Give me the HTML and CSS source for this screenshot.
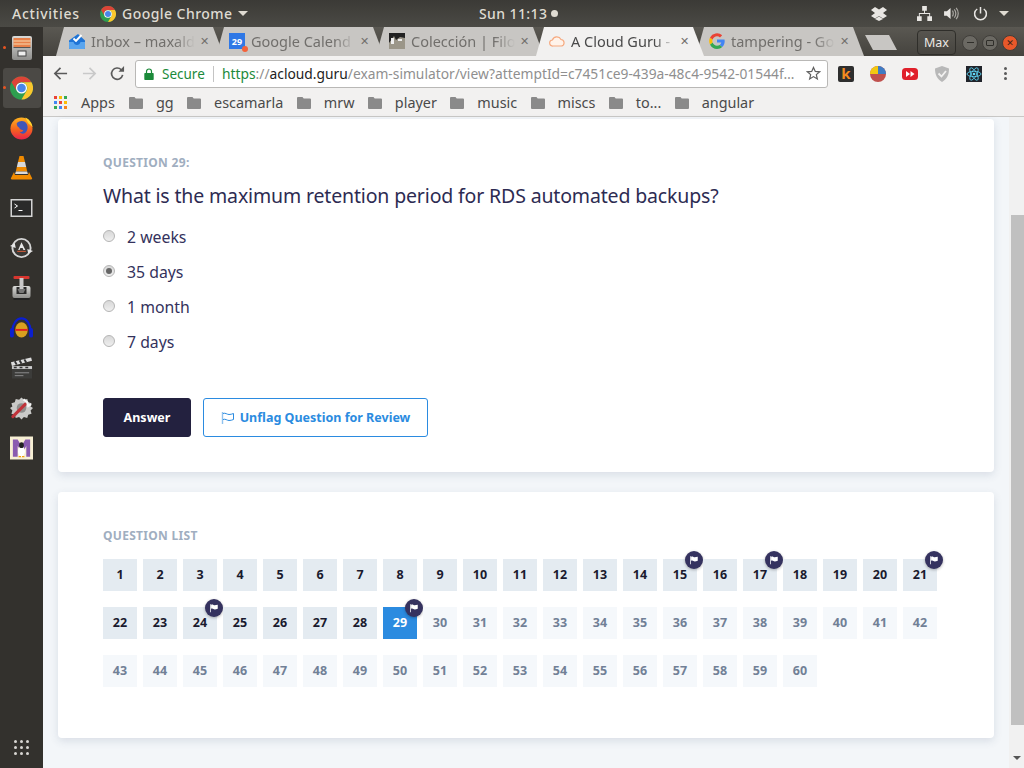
FILE: index.html
```html
<!DOCTYPE html>
<html lang="en">
<head>
<meta charset="utf-8">
<title>A Cloud Guru</title>
<link rel="stylesheet" href="styles.css">
</head>
<body>
<svg class="defs" width="0" height="0" aria-hidden="true">
  <defs>
    <symbol id="chrome" viewBox="0 0 24 24">
      <circle cx="12" cy="12" r="12" fill="#2e9e4f"/>
      <path d="M1.600 6A12 12 0 0 1 22.400 6H12A6 6 0 0 0 7 15z" fill="#dc4437"/>
      <path d="M22.400 6A12 12 0 0 1 12 24l5.200-9A6 6 0 0 0 12 6z" fill="#fbc62d"/>
      <circle cx="12" cy="12" r="5.800" fill="#fff"/>
      <circle cx="12" cy="12" r="4.500" fill="#4a86e8"/>
    </symbol>
    <symbol id="folder" viewBox="0 0 14 12">
      <path d="M1 0h4.500l1.200 1.500H13a1 1 0 0 1 1 1V11a1 1 0 0 1-1 1H1a1 1 0 0 1-1-1V1a1 1 0 0 1 1-1z" fill="#8a8a8a"/>
    </symbol>
    <symbol id="minflag" viewBox="0 0 12 12">
      <path d="M1.500 1.500h.9v9.500h-.9z" fill="#fff"/>
      <path d="M2.500 2c2-1 3 .6 4.400.6.900 0 2-.3 3.600-.6v5c-1.400.4-2.700.7-3.600.7-1.400 0-2.400-1.700-4.400-.7z" fill="#fff"/>
    </symbol>
    <linearGradient id="ffx" x1="0" y1="0" x2="0" y2="1">
      <stop offset="0" stop-color="#ffb21f"/>
      <stop offset=".55" stop-color="#f5631e"/>
      <stop offset="1" stop-color="#e8224c"/>
    </linearGradient>
    <linearGradient id="steel" x1="0" y1="0" x2="0" y2="1">
      <stop offset="0" stop-color="#d9d9d7"/>
      <stop offset="1" stop-color="#8e8e8c"/>
    </linearGradient>
  </defs>
</svg>

<header class="topbar">
  <span class="activities">Activities</span>
  <svg class="top-chrome"><use href="#chrome"/></svg>
  <span class="appname">Google Chrome</span>
  <span class="caret"></span>
  <span class="clock">Sun 11:13</span>
  <span class="clock-dot"></span>
  <svg class="tray tray-dropbox" viewBox="0 0 16 14"><path d="M4 0l4 2.600L12 0l4 3-4 3 4 3-4 2.600L8 9 4 11.600 0 9l4-3-4-3zM4 12l4-2.500 4 2.500-4 2z" fill="#e8e6e3"/></svg>
  <svg class="tray tray-net" viewBox="0 0 16 16"><path d="M5.500 0h5v5h-2v2.500H14V11h2v5h-5v-5h2V8.500H3V11h2v5H0v-5h2V7.500h5.500V5h-2z" fill="#e8e6e3"/></svg>
  <svg class="tray tray-vol" viewBox="0 0 16 14"><path d="M0 4.500h3L7 1v12L3 9.500H0z" fill="#e8e6e3"/><path d="M9 4c1.200 1.500 1.200 4.500 0 6M11 2.500c2.200 2.500 2.200 6.500 0 9M13 1c3 3.500 3 8.500 0 12" fill="none" stroke="#a9a7a2" stroke-width="1.300"/></svg>
  <svg class="tray tray-pow" viewBox="0 0 16 16"><path d="M8 1v7M4.500 3.200a6.300 6.300 0 1 0 7 0" fill="none" stroke="#e8e6e3" stroke-width="1.600"/></svg>
  <span class="caret caret-right"></span>
</header>

<div class="desktop">
  <nav class="dock">
    <div class="dock-item running">
      <svg viewBox="0 0 20 24" class="dock-icon dock-files"><rect x="0" y="0" width="20" height="24" rx="2" fill="url(#steel)"/><rect x="1.500" y="2" width="17" height="9" fill="#e8814a"/><path d="M1.500 5h17M1.500 8h17" stroke="#f8d9b0" stroke-width="1.200"/><rect x="1.500" y="11" width="17" height="1" fill="#555"/><rect x="6" y="15" width="8" height="5" fill="#eee" stroke="#444"/></svg>
    </div>
    <div class="dock-item active running">
      <svg class="dock-icon dock-chrome"><use href="#chrome"/></svg>
    </div>
    <div class="dock-item">
      <svg viewBox="0 0 24 24" class="dock-icon"><circle cx="12" cy="12.500" r="11.500" fill="url(#ffx)"/><path d="M16 1c4 1.500 7 6 7.500 10L19 7z" fill="#ffd32e"/><path d="M7 7c3-3 8-3 10 0 2 3 2 7-1 10-2 1.500-5 1-6-1 2 .5 3.500-.5 4-2-2 .5-4-.5-4.500-2.500C8 11 7 9 7 7z" fill="#3f56b8"/></svg>
    </div>
    <div class="dock-item">
      <svg viewBox="0 0 22 24" class="dock-icon"><path d="M9 0h4l1.500 6h-7z" fill="#f08a00"/><path d="M7.500 6h7l1.200 5H6.300z" fill="#d9d9d9"/><path d="M6.300 11h9.400l1 4.500H5.300z" fill="#f08a00"/><path d="M5.300 15.500h11.400l.7 2.500H4.600z" fill="#d9d9d9"/><path d="M3.500 16L.5 22a1 1 0 0 0 1 1.500h19a1 1 0 0 0 1-1.500l-3-6-1 3H4.500z" fill="#f08a00"/></svg>
    </div>
    <div class="dock-item">
      <svg viewBox="0 0 22 18" class="dock-icon dock-term"><rect x=".75" y=".75" width="20.500" height="16.500" fill="#2a2a2a" stroke="#d4d4d4" stroke-width="1.500"/><path d="M4 5l3 2-3 2" fill="none" stroke="#fff"/><path d="M8 11.500h4" stroke="#fff"/></svg>
    </div>
    <div class="dock-item">
      <svg viewBox="0 0 24 24" class="dock-icon"><circle cx="12" cy="12" r="9.500" fill="#3a3835" stroke="#d6d6d6" stroke-width="2"/><path d="M12 6l-3.500 8h1.500l.8-2h2.400l.8 2H16z" fill="#e6e6e6"/><path d="M7.500 15.500h9" stroke="#e0603a"/><path d="M0 10l5-3 1 5zM24 15l-5 3-1-5z" fill="#e6e6e6"/></svg>
    </div>
    <div class="dock-item">
      <svg viewBox="0 0 22 24" class="dock-icon"><rect x="3" y="0" width="16" height="3" rx="1" fill="#d8362f"/><rect x="2" y="10" width="18" height="12" rx="2" fill="url(#steel)"/><path d="M6 11h10v7H6z" fill="#2a2a2a"/><rect x="9" y="2" width="4" height="12" fill="#c9c9c9"/><path d="M7 13h8l-2 4H9z" fill="#777"/><rect x="3" y="22" width="16" height="2" fill="#222"/></svg>
    </div>
    <div class="dock-item">
      <svg viewBox="0 0 24 24" class="dock-icon"><path d="M2.500 15a9.500 13 0 0 1 19 0" fill="none" stroke="#0b1fd0" stroke-width="2.200"/><rect x="0" y="12" width="4" height="10" rx="2" fill="#0b1fd0"/><rect x="20" y="12" width="4" height="10" rx="2" fill="#0b1fd0"/><ellipse cx="12" cy="14" rx="6.500" ry="8" fill="#d8a01f"/><path d="M5.500 13h13v2h-13z" fill="#e02020"/></svg>
    </div>
    <div class="dock-item">
      <svg viewBox="0 0 24 24" class="dock-icon"><path d="M1 6l21-5 1 3.500L2 10z" fill="#ddd"/><path d="M5 5l2 3.500M10 4l2 3.500M15 3l2 3.500" stroke="#333" stroke-width="2"/><rect x="2" y="10" width="21" height="13" fill="#3c3c3a"/><path d="M2 10h21v3H2z" fill="#ccc"/><path d="M4 11.500h3M10 11.500h3M16 11.500h3" stroke="#333" stroke-width="1.500"/><path d="M5 17h15M5 20h9" stroke="#8f8f8f"/></svg>
    </div>
    <div class="dock-item">
      <svg viewBox="0 0 24 24" class="dock-icon"><path d="M12 1l2.500 2.500L18 2.500l1 3.500 3.500 1-1 3.500L24 12l-2.500 2.500 1 3.500-3.500 1-1 3.500-3.500-1L12 24l-2.500-2.500-3.500 1-1-3.500-3.500-1 1-3.500L0 12l2.500-1.500-1-3.500L5 6l1-3.500 3.500 1z" fill="#cacac8"/><circle cx="12" cy="12" r="5" fill="#8f8f8d"/><path d="M3 21L16 8" stroke="#c0333a" stroke-width="3.200" stroke-linecap="round"/><path d="M14 3l4 3 1 4 3-2" fill="none" stroke="#f5f5f5" stroke-width="2.200"/></svg>
    </div>
    <div class="dock-item">
      <svg viewBox="0 0 24 24" class="dock-icon"><rect width="24" height="24" fill="#f7efd4"/><path d="M3 3h5l4 7 4-7h5v18h-4V10l-4 7-5-7v11H3z" fill="#8a5bb0"/><ellipse cx="12" cy="15.500" rx="3.600" ry="5.500" fill="#fff"/><ellipse cx="12" cy="9" rx="2.400" ry="3" fill="#222"/><path d="M9 21h2.500M12.500 21H15" stroke="#f2a20d" stroke-width="1.500"/></svg>
    </div>
    <div class="dock-apps">
      <i></i><i></i><i></i><i></i><i></i><i></i><i></i><i></i><i></i>
    </div>
  </nav>

  <div class="browser">
    <div class="tabstrip">
      <div class="tab">
        <svg class="favicon" viewBox="0 0 16 16"><path d="M0 7.500L9 1l7 6.500V15a1 1 0 0 1-1 1H1a1 1 0 0 1-1-1z" fill="#1f74d6"/><path d="M0 9h4.500c.5 2 1.800 3 3.500 3s3-1 3.500-3H16v6a1 1 0 0 1-1 1H1a1 1 0 0 1-1-1z" fill="#5aa5ee"/><path d="M4.500 5.500L7 8l5.500-6" fill="none" stroke="#fff" stroke-width="1.900"/></svg>
        <span class="tab-title">Inbox – maxald</span><span class="tab-x">✕</span>
      </div>
      <div class="tab">
        <span class="cal-icon"><span class="cal-num">29</span><span class="cal-dot"></span></span>
        <span class="tab-title">Google Calend</span><span class="tab-x">✕</span>
      </div>
      <div class="tab">
        <svg class="favicon" viewBox="0 0 16 16"><rect width="16" height="16" fill="#222"/><path d="M0 10l5-7 2 4 4-3 5 1v11H0z" fill="#9b9689"/><path d="M2 5h3v6H2zM9 6h4v2H9z" fill="#eee"/></svg>
        <span class="tab-title">Colección | Filo</span><span class="tab-x">✕</span>
      </div>
      <div class="tab tab-active">
        <svg class="favicon" viewBox="0 0 16 16"><path d="M4 13a3 3 0 0 1-.6-6A4.700 4.700 0 0 1 12 6.500 3.300 3.300 0 0 1 12.500 13z" fill="#fff3ea" stroke="#f6a97f" stroke-width="1.200"/></svg>
        <span class="tab-title">A Cloud Guru -</span><span class="tab-x">✕</span>
      </div>
      <div class="tab">
        <svg class="favicon" viewBox="0 0 16 16"><path d="M15.700 8.200c0-.6-.1-1.100-.2-1.600H8v3h4.300a3.700 3.700 0 0 1-1.600 2.400l2.500 2c1.500-1.400 2.500-3.400 2.500-5.800z" fill="#4285f4"/><path d="M8 16c2.200 0 4-.7 5.200-2l-2.500-2c-.7.500-1.600.8-2.700.8-2 0-3.800-1.400-4.400-3.300L1 11.500A8 8 0 0 0 8 16z" fill="#34a853"/><path d="M3.600 9.500a4.800 4.800 0 0 1 0-3L1 4.500a8 8 0 0 0 0 7z" fill="#fbbc05"/><path d="M8 3.200c1.200 0 2.200.4 3 1.200l2.200-2.200A8 8 0 0 0 1 4.500l2.600 2C4.200 4.600 6 3.200 8 3.200z" fill="#ea4335"/></svg>
        <span class="tab-title">tampering - Go</span><span class="tab-x">✕</span>
      </div>
      <div class="newtab"></div>
      <div class="winctl">
        <span class="profile">Max</span>
        <span class="wbtn"><i class="w-min"></i></span>
        <span class="wbtn"><i class="w-max"></i></span>
        <span class="wbtn wbtn-close"><i class="w-close">✕</i></span>
      </div>
    </div>

    <div class="toolbar">
      <svg class="nav-icon" viewBox="0 0 16 16"><path d="M15 8H2M8 2L2 8l6 6" fill="none" stroke="#5a5a5a" stroke-width="1.800"/></svg>
      <svg class="nav-icon nav-fwd" viewBox="0 0 16 16"><path d="M1 8h13M8 2l6 6-6 6" fill="none" stroke="#c9c9c9" stroke-width="1.800"/></svg>
      <svg class="nav-icon nav-reload" viewBox="0 0 16 16"><path d="M13.500 9.500A6 6 0 1 1 12 4" fill="none" stroke="#5a5a5a" stroke-width="1.800"/><path d="M9 6h6V0z" fill="#5a5a5a"/></svg>
      <div class="omnibox">
        <svg class="lock" viewBox="0 0 10 12"><path d="M1 5h8a.7.7 0 0 1 .7.7v5.600a.7.7 0 0 1-.7.7H1a.7.7 0 0 1-.7-.7V5.700A.7.7 0 0 1 1 5z" fill="#1b8a3a"/><path d="M2.500 5V3.500a2.500 2.500 0 0 1 5 0V5" fill="none" stroke="#1b8a3a" stroke-width="1.200"/></svg>
        <span class="secure">Secure</span>
        <span class="sep"></span>
        <span class="url"><span class="u-https">https</span><span class="u-rest">://</span><span class="u-host">acloud.guru</span><span class="u-rest">/exam-simulator/view?attemptId=c7451ce9-439a-48c4-9542-01544f…</span></span>
        <svg class="star" viewBox="0 0 16 16"><path d="M8 1.500l1.900 4.300 4.600.4-3.500 3 1.100 4.600L8 11.300l-4.100 2.500L5 9.200l-3.500-3 4.600-.4z" fill="none" stroke="#5f5f5f" stroke-width="1.300"/></svg>
      </div>
      <div class="ext ext-k"><span>k</span></div>
      <svg class="ext" viewBox="0 0 16 16"><circle cx="8" cy="8" r="8" fill="#c0504d"/><path d="M8 8V0a8 8 0 0 1 8 8z" fill="#3f7cc4"/><path d="M8 8V0A8 8 0 0 0 0 8z" fill="#f2c811"/></svg>
      <svg class="ext" viewBox="0 0 16 16"><rect y="2" width="16" height="12" rx="3.500" fill="#e0202a"/><path d="M4 5l4 3-4 3zM8.500 5l4 3-4 3z" fill="#fff"/></svg>
      <svg class="ext" viewBox="0 0 16 16"><path d="M8 0l7 2.500C15 9 13 13 8 16 3 13 1 9 1 2.500z" fill="#b8b8b8"/><path d="M4.500 7.500L7.500 10.500 12 5" fill="none" stroke="#f2f1f0" stroke-width="1.800"/></svg>
      <svg class="ext" viewBox="0 0 16 16"><rect width="16" height="16" fill="#20232a"/><g fill="none" stroke="#61dafb" stroke-width=".8"><ellipse cx="8" cy="8" rx="7" ry="2.700"/><ellipse cx="8" cy="8" rx="7" ry="2.700" transform="rotate(60 8 8)"/><ellipse cx="8" cy="8" rx="7" ry="2.700" transform="rotate(120 8 8)"/></g><circle cx="8" cy="8" r="1.300" fill="#61dafb"/></svg>
      <div class="kebab"><i></i><i></i><i></i></div>
    </div>

    <div class="bookmarks">
      <div class="apps-grid"><i class="r"></i><i class="y"></i><i class="g"></i><i class="b"></i><i class="r"></i><i class="y"></i><i class="g"></i><i class="b"></i><i class="o"></i></div>
      <span class="bm-apps">Apps</span>
      <span class="bm"><svg class="folder"><use href="#folder"/></svg>gg</span>
      <span class="bm"><svg class="folder"><use href="#folder"/></svg>escamarla</span>
      <span class="bm"><svg class="folder"><use href="#folder"/></svg>mrw</span>
      <span class="bm"><svg class="folder"><use href="#folder"/></svg>player</span>
      <span class="bm"><svg class="folder"><use href="#folder"/></svg>music</span>
      <span class="bm"><svg class="folder"><use href="#folder"/></svg>miscs</span>
      <span class="bm"><svg class="folder"><use href="#folder"/></svg>to...</span>
      <span class="bm"><svg class="folder"><use href="#folder"/></svg>angular</span>
    </div>

    <div class="viewport">
      <main class="page">
        <section class="card card-question">
          <div class="eyebrow">QUESTION 29:</div>
          <h1 class="question">What is the maximum retention period for RDS automated backups?</h1>
          <div class="options">
            <label class="option"><span class="radio"></span>2 weeks</label>
            <label class="option"><span class="radio radio-on"></span>35 days</label>
            <label class="option"><span class="radio"></span>1 month</label>
            <label class="option"><span class="radio"></span>7 days</label>
          </div>
          <div class="actions">
            <button class="btn btn-primary">Answer</button>
            <button class="btn btn-outline">
              <svg class="btn-flag" viewBox="0 0 14 12"><path d="M1.500 0v12" stroke="#90c2ee" stroke-width="1.400"/><path d="M2 1.500c2.500-1 4 1 6 1 1.500 0 3-.4 4.500-1v6c-1.500.6-3 1-4.500 1-2 0-3.500-2-6-1" fill="none" stroke="#2b8be0"/></svg>
              Unflag Question for Review
            </button>
          </div>
        </section>

        <section class="card card-list">
          <div class="eyebrow">QUESTION LIST</div>
          <div class="qgrid" id="qgrid"></div>
        </section>
      </main>
      <div class="scrollbar">
        <div class="sb-space"></div>
        <div class="sb-thumb"></div>
        <div class="sb-arrow"></div>
      </div>
    </div>
  </div>
</div>
<script src="app.js"></script>
</body>
</html>
```

FILE: app.js
```js
var grid = document.getElementById('qgrid');
var flagged = [15, 17, 21, 24, 29];
for (var i = 1; i <= 60; i++) {
  var c = document.createElement('span');
  c.className = 'q ' + (i === 29 ? 'q-current' : i < 29 ? 'q-done' : 'q-todo');
  c.textContent = i;
  if (flagged.indexOf(i) >= 0) {
    var b = document.createElement('span');
    b.className = 'q-badge';
    b.innerHTML = '<svg viewBox="0 0 12 12"><use href="#minflag"/></svg>';
    c.appendChild(b);
  }
  grid.appendChild(c);
}
```

FILE: styles.css
```css
* { box-sizing: border-box; }
html, body { margin: 0; padding: 0; }
body {
  width: 1024px;
  height: 768px;
  overflow: hidden;
  display: flex;
  flex-direction: column;
  font-family: "Noto Sans", "DejaVu Sans", sans-serif;
  background: #33312d;
}
.defs { position: absolute; }

/* top bar */
.topbar {
  height: 27px;
  flex: none;
  display: flex;
  align-items: center;
  background: linear-gradient(#3b3a36, #4b4a45);
  color: #dfdbd2;
  font-size: 14px;
  font-weight: 500;
}
.activities { margin-left: 12px; width: 88px; letter-spacing: .75px; white-space: nowrap; }
.top-chrome { width: 16px; height: 16px; flex: none; }
.appname { margin-left: 6px; width: 110px; letter-spacing: .45px; white-space: nowrap; }
.caret { width: 0; height: 0; margin-left: 6px; border: 5px solid transparent; border-top-color: #dfdbd2; border-bottom-width: 0; }
.clock { margin-left: 231px; width: 70px; white-space: nowrap; letter-spacing: .4px; }
.clock-dot { width: 7px; height: 7px; border-radius: 50%; background: #dfdbd2; margin-left: 2px; }
.tray { display: block; flex: none; }
.tray-dropbox { width: 16px; height: 14px; margin-left: 313px; }
.tray-net { width: 15px; height: 15px; margin-left: 30px; }
.tray-vol { width: 15px; height: 13px; margin-left: 12px; }
.tray-pow { width: 15px; height: 15px; margin-left: 14px; }
.caret-right { margin-left: 11px; }

.desktop { flex: 1; display: flex; min-height: 0; }

/* dock */
.dock {
  width: 43px;
  flex: none;
  background: #33312d;
  display: flex;
  flex-direction: column;
  align-items: center;
  padding-top: 1px;
}
.dock-item {
  position: relative;
  width: 38px;
  height: 40px;
  display: flex;
  align-items: center;
  justify-content: center;
  border-radius: 3px;
}
.dock-item.active { background: #4b4945; }
.dock-item.running::before {
  content: "";
  position: absolute;
  left: 0;
  top: 18px;
  width: 3px;
  height: 3px;
  border-radius: 50%;
  background: #e95420;
}
.dock-icon { width: 23px; height: 24px; display: block; }
.dock-files { width: 20px; }
.dock-term { height: 18px; }
.dock-apps {
  margin-top: auto;
  margin-bottom: 13px;
  display: grid;
  grid-template-columns: repeat(3, 3px);
  gap: 3px;
}
.dock-apps i { width: 3px; height: 3px; border-radius: 50%; background: #d8d6d2; }

/* browser */
.browser { flex: 1; display: flex; flex-direction: column; min-width: 0; }
.tabstrip {
  height: 29px;
  flex: none;
  display: flex;
  padding-left: 13px;
  background: linear-gradient(#5a5852, #45433e);
}
.tab {
  position: relative;
  width: 168px;
  height: 29px;
  margin-right: -8px;
  padding: 0 0 2px 13px;
  display: flex;
  align-items: center;
  flex: none;
  background: #c8c6c3;
  clip-path: polygon(8px 0, 157px 0, 168px 100%, 0 100%);
  color: #716f6c;
  font-size: 14.500px;
}
.tab-active { background: #f2f1f0; color: #4a4a4a; z-index: 2; }
.favicon { width: 16px; height: 16px; flex: none; }
.cal-icon {
  position: relative;
  width: 16px;
  height: 16px;
  flex: none;
  background: #2f78e6;
  color: #fff;
  font-size: 9px;
  font-weight: 700;
  text-align: center;
  line-height: 17px;
}
.cal-dot {
  position: absolute;
  right: -3px;
  bottom: -3px;
  width: 6px;
  height: 6px;
  border-radius: 50%;
  background: #f4623a;
}
.tab-title {
  margin-left: 6px;
  width: 104px;
  overflow: hidden;
  white-space: nowrap;
  -webkit-mask-image: linear-gradient(to right, #000 80%, transparent);
  mask-image: linear-gradient(to right, #000 80%, transparent);
}
.tab-x { margin-left: 5px; font-size: 11px; color: #716f6c; }
.newtab {
  width: 32px;
  height: 15px;
  margin: 8px 0 0 9px;
  flex: none;
  background: #c8c6c3;
  clip-path: polygon(0 0, 24px 0, 32px 100%, 8px 100%);
}
.winctl { display: flex; align-items: center; margin-left: 20px; gap: 4px; height: 29px; padding-top: 2px; }
.profile {
  width: 39px;
  height: 25px;
  margin-right: 2px;
  border: 1px solid #2f2e2a;
  border-radius: 4px;
  color: #ece9e4;
  font-size: 12.500px;
  display: flex;
  align-items: center;
  justify-content: center;
}
.wbtn {
  width: 16px;
  height: 16px;
  border-radius: 50%;
  background: #6b6963;
  border: 1px solid #403e3a;
  display: flex;
  align-items: center;
  justify-content: center;
}
.wbtn-close { background: #e9582a; }
.w-min { width: 7px; height: 1px; background: #2f2e2a; }
.w-max { width: 8px; height: 6px; border: 1px solid #2f2e2a; border-radius: 1px; }
.w-close { font-size: 9px; font-style: normal; color: #3d2218; }

/* toolbar */
.toolbar {
  height: 35px;
  flex: none;
  display: flex;
  align-items: center;
  background: #f2f1f0;
  padding-left: 10px;
}
.nav-icon { width: 15px; height: 15px; flex: none; }
.nav-fwd { margin-left: 14px; }
.nav-reload { margin-left: 13px; }
.omnibox {
  width: 693px;
  height: 28px;
  margin-left: 10px;
  background: #fff;
  border: 1px solid #b9b8b6;
  border-radius: 3px;
  display: flex;
  align-items: center;
  padding-left: 8px;
  flex: none;
}
.lock { width: 10px; height: 12px; flex: none; }
.secure { margin-left: 8px; width: 43px; font-size: 13.500px; color: #1b8a3a; white-space: nowrap; }
.sep { width: 1px; height: 16px; background: #c4c4c4; margin: 0 8px 0 8px; }
.url { font-size: 13.800px; white-space: nowrap; color: #8f8f8f; width: 584px; overflow: hidden; }
.u-https { color: #1b8a3a; }
.u-host { color: #222; }
.star { width: 15px; height: 15px; flex: none; }
.ext { width: 16px; height: 16px; margin-left: 16px; flex: none; display: block; }
.ext-k {
  background: #2e2e2e;
  border-radius: 2px;
  color: #f58a1f;
  font-size: 15px;
  font-weight: 700;
  line-height: 15px;
  text-align: center;
}
.omnibox + .ext { margin-left: 10px; }
.kebab { margin-left: 22px; display: flex; flex-direction: column; gap: 2px; }
.kebab i { width: 3px; height: 3px; border-radius: 50%; background: #5a5a5a; }

/* bookmarks */
.bookmarks {
  height: 26px;
  flex: none;
  display: flex;
  align-items: center;
  background: #f2f1f0;
  border-bottom: 1px solid #c9c8c6;
  padding: 0 0 2px 11px;
  font-size: 14.400px;
  color: #4a4a4a;
}
.apps-grid { display: grid; grid-template-columns: repeat(3, 3px); gap: 2px; }
.apps-grid i { width: 3px; height: 3px; }
.apps-grid .r { background: #ea4335; }
.apps-grid .y { background: #fbbc05; }
.apps-grid .g { background: #34a853; }
.apps-grid .b { background: #4285f4; }
.apps-grid .o { background: #f58220; }
.bm-apps { margin-left: 14px; width: 48px; }
.bm { display: flex; align-items: center; margin-right: 13.400px; white-space: nowrap; }
.folder { width: 14px; height: 12px; margin-right: 13px; flex: none; }

/* page */
.viewport { flex: 1; display: flex; min-height: 0; background: #f3f6f9; }
.page {
  flex: 1;
  min-width: 0;
  padding: 2px 15px 0;
  display: flex;
  flex-direction: column;
  gap: 20px;
}
.card {
  background: #fff;
  border-radius: 4px;
  box-shadow: 0 3px 8px rgba(60, 80, 110, .14);
  padding: 0 45px;
}
.card-question { height: 353px; padding-top: 36px; }
.card-list { height: 246px; padding-top: 36px; }
.eyebrow {
  font-size: 12px;
  line-height: 16px;
  font-weight: 700;
  letter-spacing: .3px;
  color: #a0aec0;
}
.card-list .eyebrow { letter-spacing: .3px; }
.question {
  margin: 11px 0 0;
  font-size: 19.500px;
  line-height: 28px;
  font-weight: 400;
  letter-spacing: -.15px;
  color: #2d2b52;
  white-space: nowrap;
}
.options { margin-top: 9px; display: flex; flex-direction: column; }
.option {
  height: 35px;
  display: flex;
  align-items: center;
  font-size: 15.800px;
  color: #34325c;
}
.radio {
  width: 12px;
  height: 12px;
  margin-right: 12px;
  margin-top: -2px;
  border-radius: 50%;
  border: 1px solid #b5b5b5;
  background: linear-gradient(#d8d8d8, #efefef);
  display: flex;
  align-items: center;
  justify-content: center;
}
.radio-on::after {
  content: "";
  width: 6px;
  height: 6px;
  border-radius: 50%;
  background: #666;
}
.actions { margin-top: 39px; display: flex; gap: 12px; }
.btn {
  height: 39px;
  border-radius: 3px;
  font-family: inherit;
  font-size: 12.500px;
  font-weight: 700;
  display: flex;
  align-items: center;
  justify-content: center;
}
.btn-primary { width: 88px; background: #23213f; border: 1px solid #23213f; color: #fff; }
.btn-outline { width: 225px; background: #fff; border: 1px solid #2b8be0; color: #2b8be0; gap: 5px; }
.btn-flag { width: 14px; height: 12px; }

.qgrid {
  margin-top: 15px;
  display: grid;
  grid-template-columns: repeat(21, 34px);
  grid-auto-rows: 32px;
  gap: 16px 6px;
}
.q {
  position: relative;
  display: flex;
  align-items: center;
  justify-content: center;
  padding-bottom: 1px;
  font-size: 12.500px;
  font-weight: 700;
}
.q-done { background: #e4ebf1; color: #1a1a2e; }
.q-todo { background: #f5f8fb; color: #718096; }
.q-current { background: #2b8be0; color: #fff; }
.q-badge {
  position: absolute;
  right: -6px;
  top: -8px;
  width: 18px;
  height: 18px;
  border-radius: 50%;
  background: #35325f;
  box-shadow: 0 1px 3px rgba(0, 0, 0, .3);
  display: flex;
  align-items: center;
  justify-content: center;
}
.q-badge svg { width: 10px; height: 10px; display: block; }

/* scrollbar */
.scrollbar { width: 15px; flex: none; background: #f1f1f1; display: flex; flex-direction: column; align-items: flex-end; }
.sb-space { height: 98px; flex: none; }
.sb-thumb { width: 13px; height: 510px; background: #c0c0c0; flex: none; }
.sb-arrow {
  margin: 31px 3px 0 0;
  width: 0;
  height: 0;
  border: 4px solid transparent;
  border-top-color: #555;
  border-bottom-width: 0;
}
```
